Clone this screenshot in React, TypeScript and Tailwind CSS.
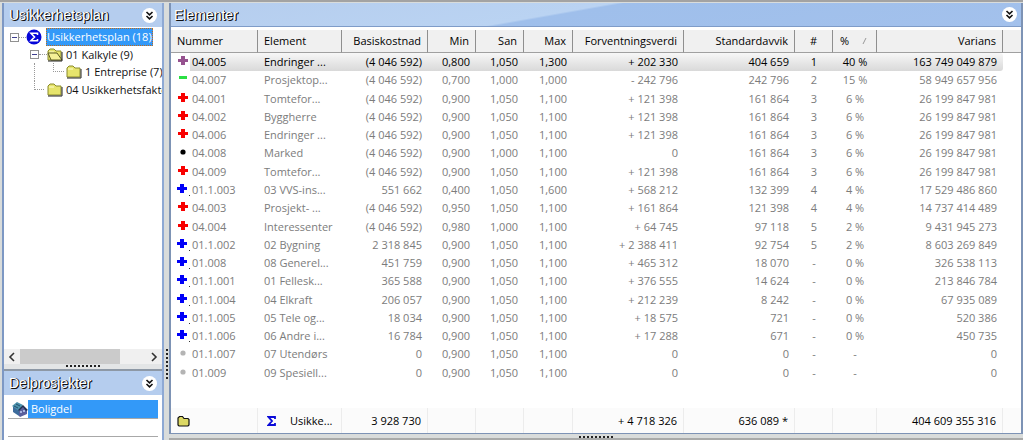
import type { ReactNode } from 'react'

type Mark = 'plus' | 'minus' | 'dot'
type Tone = 'purple' | 'green' | 'red' | 'blue' | 'black' | 'gray'

interface Row {
  mark: Mark
  tone: Tone
  tick?: boolean
  nr: string
  name: string
  base: string
  min: string
  san: string
  max: string
  expected: string
  deviation: string
  rank: string
  share: string
  variance: string
}

const row = (mark: Mark, tone: Tone, line: string, tick = false): Row => {
  const [nr, name, base, min, san, max, expected, deviation, rank, share, variance] = line.split('|')
  return { mark, tone, tick, nr, name, base, min, san, max, expected, deviation, rank, share, variance }
}

const rows: Row[] = [
  row('plus', 'purple', '04.005|Endringer ...|(4 046 592)|0,800|1,050|1,300|+ 202 330|404 659|1|40 %|163 749 049 879'),
  row('minus', 'green', '04.007|Prosjektop...|(4 046 592)|0,700|1,000|1,000|- 242 796|242 796|2|15 %|58 949 657 956'),
  row('plus', 'red', '04.001|Tomtefor...|(4 046 592)|0,900|1,050|1,100|+ 121 398|161 864|3|6 %|26 199 847 981'),
  row('plus', 'red', '04.002|Byggherre|(4 046 592)|0,900|1,050|1,100|+ 121 398|161 864|3|6 %|26 199 847 981'),
  row('plus', 'red', '04.006|Endringer ...|(4 046 592)|0,900|1,050|1,100|+ 121 398|161 864|3|6 %|26 199 847 981'),
  row('dot', 'black', '04.008|Marked|(4 046 592)|0,900|1,000|1,100|0|161 864|3|6 %|26 199 847 981'),
  row('plus', 'red', '04.009|Tomtefor...|(4 046 592)|0,900|1,050|1,100|+ 121 398|161 864|3|6 %|26 199 847 981'),
  row('plus', 'blue', '01.1.003|03 VVS-ins...|551 662|0,400|1,050|1,600|+ 568 212|132 399|4|4 %|17 529 486 860', true),
  row('plus', 'red', '04.003|Prosjekt- ...|(4 046 592)|0,950|1,050|1,100|+ 161 864|121 398|4|4 %|14 737 414 489'),
  row('plus', 'red', '04.004|Interessenter|(4 046 592)|0,980|1,000|1,100|+ 64 745|97 118|5|2 %|9 431 945 273'),
  row('plus', 'blue', '01.1.002|02 Bygning|2 318 845|0,900|1,050|1,100|+ 2 388 411|92 754|5|2 %|8 603 269 849', true),
  row('plus', 'blue', '01.008|08 Generel...|451 759|0,900|1,050|1,100|+ 465 312|18 070|-|0 %|326 538 113', true),
  row('plus', 'blue', '01.1.001|01 Fellesk...|365 588|0,900|1,050|1,100|+ 376 555|14 624|-|0 %|213 846 784', true),
  row('plus', 'blue', '01.1.004|04 Elkraft|206 057|0,900|1,050|1,100|+ 212 239|8 242|-|0 %|67 935 089', true),
  row('plus', 'blue', '01.1.005|05 Tele og...|18 034|0,900|1,050|1,100|+ 18 575|721|-|0 %|520 386', true),
  row('plus', 'blue', '01.1.006|06 Andre i...|16 784|0,900|1,050|1,100|+ 17 288|671|-|0 %|450 735', true),
  row('dot', 'gray', '01.1.007|07 Utendørs|0|0,900|1,050|1,100|0|0|-|-|0'),
  row('dot', 'gray', '01.009|09 Spesiell...|0|0,900|1,050|1,100|0|0|-|-|0'),
]

const toneClass: Record<Tone, string> = {
  purple: 'fill-[#96528f]',
  green: 'fill-[#2be044]',
  red: 'fill-[#f80000]',
  blue: 'fill-[#0000f8]',
  black: 'fill-black',
  gray: 'fill-[#b4b4b4]',
}

function MarkIcon({ mark, tone, tick }: { mark: Mark; tone: Tone; tick?: boolean }) {
  return (
    <svg viewBox="0 0 16 14" className={`h-[14px] w-4 shrink-0 ${toneClass[tone]}`} aria-hidden="true">
      {mark === 'plus' && !tick && <path d="M6 1h4v3h3v3h-3v3H6V7H3V4h3z" />}
      {mark === 'plus' && tick && <path d="M5 1h4v3h3v3H9v3H5V7H2V4h3z" />}
      {mark === 'minus' && <path d="M4 3h8v3H4z" />}
      {mark === 'dot' && <circle cx="8" cy="6" r="2.6" />}
      {tick && <path d="M14 12h1v1h-1z" className="fill-[#333]" />}
    </svg>
  )
}

function FolderIcon({ open }: { open?: boolean }) {
  return (
    <svg viewBox="0 0 16 14" className="h-[14px] w-4 shrink-0" aria-hidden="true">
      <path d="M1 12V3l2-2h4l2 2h5v9z" fill="#e6e46c" stroke="#8a8a2a" />
      <path d="M2 4h5" stroke="#fffdd0" />
      {open && <path d="M1 5h9l5 7H4z" fill="#f4f096" stroke="#5c5c20" />}
      <path d="M1 13h14V4" fill="none" stroke="#222" />
    </svg>
  )
}

function TotalFolderIcon() {
  return (
    <svg viewBox="0 0 13 12" className="h-3 w-[13px]" aria-hidden="true">
      <path d="M1 10V3l1.500-1.500h3L7 3.500h4l1 1V10l-1 1H2z" fill="#dcd864" stroke="#111" strokeWidth="1.2" />
    </svg>
  )
}

function SigmaIcon() {
  return (
    <svg viewBox="0 0 16 16" className="size-4 shrink-0" aria-hidden="true">
      <circle cx="8" cy="8" r="7.5" fill="#0505d8" />
      <path d="M11.5 6V4.3H5L8.5 8 5 11.7h6.500V10" fill="none" stroke="#fff" strokeWidth="1.6" />
    </svg>
  )
}

function HouseIcon() {
  return (
    <svg viewBox="0 0 16 16" className="size-4 shrink-0" aria-hidden="true">
      <path d="M1 5l6 4v6l-6-4z" fill="#3d6c9c" />
      <path d="M7 9l4-4 4 4v4l-7 3-1-1z" fill="#5a5f9c" />
      <path d="M0 5l5-4 6 3-4 6z" fill="#4d93ad" />
      <path d="M11 4l5 5-2 1-3-4-4 4-1-1z" fill="#22304f" />
      <path d="M8 10h2v2H8zM11 9h2v2h-2z" fill="#a9b4e0" />
      <path d="M2 5l4 2M4 3l4 2" stroke="#24506d" />
    </svg>
  )
}

function CollapseButton({ label }: { label: string }) {
  return (
    <button type="button" aria-label={label} className="flex size-[15px] shrink-0 items-center justify-center rounded-full bg-white">
      <svg viewBox="0 0 9 9" className="size-[9px]" fill="none" stroke="#111" strokeWidth="1.6" aria-hidden="true">
        <path d="M1.500 1l3 2.800L7.500 1M1.500 5l3 2.800L7.500 5" />
      </svg>
    </button>
  )
}

function PanelTitle({ children }: { children: ReactNode }) {
  return (
    <h2 className="font-['Liberation_Sans',sans-serif] text-[14px] font-normal leading-4 text-white [text-shadow:1px_0_0_#111,1px_1px_0_#111]">
      {children}
    </h2>
  )
}

function Grip({ vertical }: { vertical?: boolean }) {
  return (
    <div
      className={
        vertical
          ? 'h-8 w-[2px] bg-[repeating-linear-gradient(to_bottom,#222_0_2px,transparent_2px_4px)]'
          : 'h-[2px] w-[34px] bg-[repeating-linear-gradient(to_right,#222_0_2px,transparent_2px_4px)]'
      }
    />
  )
}

function Expander() {
  return (
    <button type="button" aria-label="Skjul" className="flex size-[9px] shrink-0 items-center justify-center border border-[#919191] bg-white">
      <span className="h-px w-[5px] bg-[#3f3f90]" />
    </button>
  )
}

function Tree() {
  return (
    <ul className="min-h-0 flex-1 overflow-hidden pt-px pl-[6px] whitespace-nowrap">
      <li>
        <div className="flex h-[18px] items-center">
          <Expander />
          <span className="w-[7px] border-t border-dotted border-[#999]" />
          <SigmaIcon />
          <span className="ml-1 border border-dotted border-[#c06a1c] bg-[#3399f8] leading-[16px] text-white">Usikkerhetsplan (18)</span>
        </div>
        <ul className="ml-[20px]">
          <li>
            <div className="flex h-[17px] items-center">
              <Expander />
              <span className="w-2 border-t border-dotted border-[#999]" />
              <FolderIcon open />
              <span className="pl-[3px]">01 Kalkyle (9)</span>
            </div>
            <ul className="ml-[4px] border-l border-dotted border-[#999] pl-[18px]">
              <li className="flex h-[18px]">
                <span className="h-[9px] w-[11px] shrink-0 border-b border-l border-dotted border-[#999]" />
                <span className="flex items-center pl-[2px]">
                  <FolderIcon />
                  <span className="pl-[3px]">1 Entreprise (7)</span>
                </span>
              </li>
            </ul>
          </li>
          <li className="ml-[4px] flex h-[17px]">
            <span className="h-[9px] w-[10px] shrink-0 border-b border-l border-dotted border-[#999]" />
            <span className="flex items-center pl-[3px]">
              <FolderIcon />
              <span className="pl-[3px]">04 Usikkerhetsfakto</span>
            </span>
          </li>
        </ul>
      </li>
    </ul>
  )
}

function Sidebar() {
  return (
    <aside className="flex w-[162px] shrink-0 flex-col border-x-2 border-[#8ea9d4] border-l-[#7d98c4] bg-white">
      <header className="flex h-6 shrink-0 items-center justify-between bg-[#b5cdee] px-[5px]">
        <PanelTitle>Usikkerhetsplan</PanelTitle>
        <CollapseButton label="Skjul Usikkerhetsplan" />
      </header>
      <Tree />
      <div className="flex h-[15px] shrink-0 items-center justify-between bg-[#f0f0f0] px-[4px]">
        <svg viewBox="0 0 8 10" className="h-[10px] w-2" fill="none" stroke="#333" strokeWidth="1.6" aria-hidden="true">
          <path d="M6 1L2 5l4 4" />
        </svg>
        <div className="mr-auto ml-[4px] h-[15px] w-[100px] bg-[#cbcbcb]" />
        <svg viewBox="0 0 8 10" className="h-[10px] w-2" fill="none" stroke="#333" strokeWidth="1.6" aria-hidden="true">
          <path d="M2 1l4 4-4 4" />
        </svg>
      </div>
      <div className="flex h-[7px] shrink-0 justify-center border-b-2 border-[#8d98a5] bg-[#e3e5e6] pt-px">
        <Grip />
      </div>
      <header className="flex h-6 shrink-0 items-center justify-between bg-[#b5cdee] px-[5px]">
        <PanelTitle>Delprosjekter</PanelTitle>
        <CollapseButton label="Skjul Delprosjekter" />
      </header>
      <ul className="h-[45px] shrink-0 px-[4px] pt-[5px]">
        <li className="flex h-[19px] items-center border-b border-[#a8a8a8] pl-[4px]">
          <HouseIcon />
          <span className="h-[18px] flex-1 bg-[#3399f8] pl-[3px] leading-[18px] text-white">Boligdel</span>
        </li>
        <li className="h-[18px] border-b border-[#a8a8a8]" />
      </ul>
    </aside>
  )
}

const th = 'border-r border-[#8f8f8f] px-[6px] font-normal'
const foot = 'border-r border-[#ececec] px-[6px]'
const selected = 'bg-linear-to-b from-[#f7f7f7] to-[#d9d9d9]'

function ElementTable() {
  return (
    <table className="h-full w-full table-fixed border-separate border-spacing-0 text-right leading-4 whitespace-nowrap">
      <colgroup>
        <col className="w-[87px]" />
        <col className="w-[84px]" />
        <col className="w-[86px]" />
        <col className="w-[48px]" />
        <col className="w-[48px]" />
        <col className="w-[49px]" />
        <col className="w-[111px]" />
        <col className="w-[111px]" />
        <col className="w-[38px]" />
        <col className="w-[44px]" />
        <col />
        <col className="w-[18px]" />
      </colgroup>
      <thead>
        <tr className="h-[23px] bg-[#f0f0f0] text-black [&>th]:border-b [&>th]:border-b-[#a0a0a0]">
          <th className={`${th} text-left`}>Nummer</th>
          <th className={`${th} text-left`}>Element</th>
          <th className={th}>Basiskostnad</th>
          <th className={th}>Min</th>
          <th className={th}>San</th>
          <th className={th}>Max</th>
          <th className={th}>Forventningsverdi</th>
          <th className={th}>Standardavvik</th>
          <th className={`${th} text-center`}>#</th>
          <th className={th}>
            <span className="flex items-center justify-between pr-[3px] pl-px">
              %
              <svg viewBox="0 0 5 8" className="h-2 w-[5px]" stroke="#999" aria-hidden="true"><path d="M1 7l3-6" /></svg>
            </span>
          </th>
          <th className={th}>Varians</th>
          <th />
        </tr>
      </thead>
      <tbody>
        {rows.map((r, i) => {
          const bg = i === 0 ? selected : ''
          return (
            <tr key={r.nr} className={i === 0 ? 'text-black' : 'text-[#7c7c7c]'}>
              <td className={`text-left ${bg} ${i === 0 ? 'bg-[position:19px_0] bg-no-repeat' : ''}`}>
                <span className="flex items-center pl-[4px]">
                  <MarkIcon mark={r.mark} tone={r.tone} tick={r.tick} />
                  <span className="pl-px">{r.nr}</span>
                </span>
              </td>
              <td className={`px-[6px] text-left ${bg}`}>{r.name}</td>
              <td className={`px-[6px] ${bg}`}>{r.base}</td>
              <td className={`px-[6px] ${bg}`}>{r.min}</td>
              <td className={`px-[6px] ${bg}`}>{r.san}</td>
              <td className={`px-[6px] ${bg}`}>{r.max}</td>
              <td className={`px-[6px] ${bg}`}>{r.expected}</td>
              <td className={`px-[6px] ${bg}`}>{r.deviation}</td>
              <td className={`text-center ${bg}`}>{r.rank}</td>
              <td className={`text-center ${bg}`}>{r.share}</td>
              <td className={`px-[6px] ${bg} ${i === 0 ? 'rounded-r-[3px]' : ''}`}>{r.variance}</td>
              <td />
            </tr>
          )
        })}
      </tbody>
      <tfoot>
        <tr className="h-[26px]"><td colSpan={12} /></tr>
        <tr className="h-[25px] bg-[#fbfbfb] text-black">
          <td className={foot}><TotalFolderIcon /></td>
          <td className={`${foot} text-left`}>
            <span className="flex items-center gap-[14px] pl-[3px]">
              <svg viewBox="0 0 9 10" className="h-[10px] w-[9px]" fill="none" stroke="#0a0ad8" strokeWidth="1.8" aria-hidden="true">
                <path d="M8 3V1H1.500L5 5 1.500 9H8V7" />
              </svg>
              Usikke...
            </span>
          </td>
          <td className={foot}>3 928 730</td>
          <td className={foot} />
          <td className={foot} />
          <td className={foot} />
          <td className={foot}>+ 4 718 326</td>
          <td className={foot}>636 089 *</td>
          <td className={foot} />
          <td className={foot} />
          <td className={foot}>404 609 355 316</td>
          <td />
        </tr>
      </tfoot>
    </table>
  )
}

export default function App() {
  return (
    <div className="flex h-screen min-h-[440px] flex-col border-t-2 border-[#a3a3a3] bg-[#d9dcdb] pl-[2px] font-['Open_Sans','Noto_Sans',sans-serif] text-[11px] leading-4 text-[#111]">
      <div className="flex min-h-0 flex-1 pt-px">
        <Sidebar />
        <div className="flex w-[5px] shrink-0 items-end justify-center pb-[59px]">
          <Grip vertical />
        </div>
        <div className="flex min-w-0 flex-1 flex-col">
          <main className="flex min-h-0 flex-1 flex-col border-x-2 border-b border-[#7d93b5] bg-white">
            <header className="flex h-6 shrink-0 items-center justify-between border-b border-[#7f9cc8] bg-[linear-gradient(170deg,#b5cdee_0,#bad3f2_77px,#9fbfeb_79px,#a3c1ec_100%)] pr-[4px] pl-[3px]">
              <PanelTitle>Elementer</PanelTitle>
              <CollapseButton label="Skjul Elementer" />
            </header>
            <div className="min-h-0 flex-1 pt-[3px]">
              <ElementTable />
            </div>
          </main>
          <div className="flex h-[6px] shrink-0 justify-center border-b-2 border-[#a9aaa9] pt-[2px]">
            <Grip />
          </div>
        </div>
      </div>
    </div>
  )
}
